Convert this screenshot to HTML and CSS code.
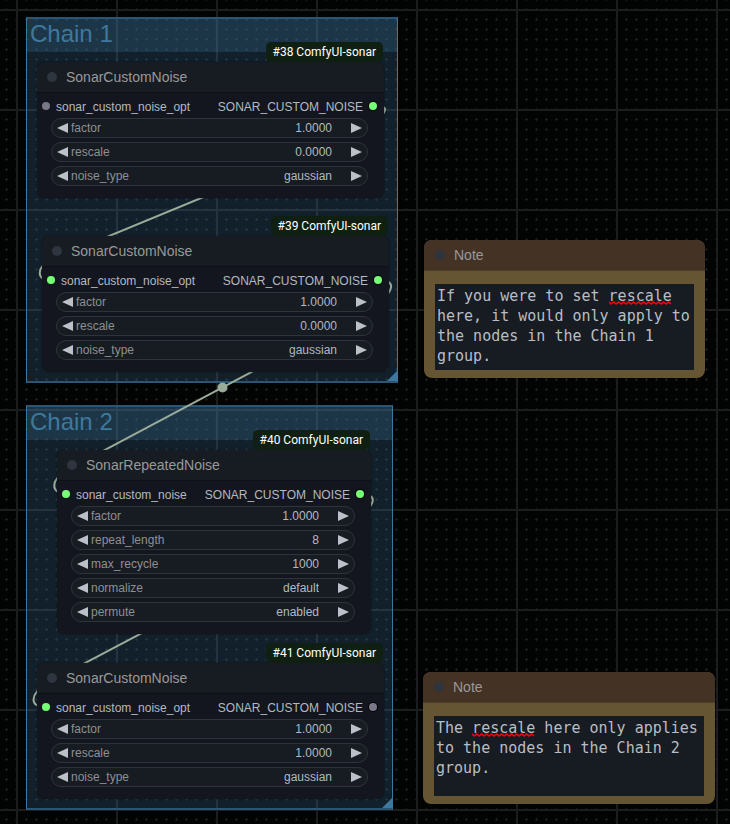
FILE: index.html
```html
<!DOCTYPE html>
<html lang="en">
<head>
<meta charset="utf-8">
<title>Workflow</title>
<link rel="stylesheet" href="styles.css">
</head>
<body>
<main class="canvas">
  <svg class="layer" aria-hidden="true">
    <defs>
      <pattern id="dots" x="1" y="4" width="10" height="10" patternUnits="userSpaceOnUse">
        <path class="dot-mark" d="M4 5h3v1h-3zM5 4h1v3h-1z"/>
      </pattern>
      <pattern id="lines" x="16" y="9" width="100" height="100" patternUnits="userSpaceOnUse">
        <path class="grid-line" d="M0 0h100v2h-98v98h-2z"/>
      </pattern>
    </defs>
    <rect width="100%" height="100%" fill="url(#dots)"/>
    <rect width="100%" height="100%" fill="url(#lines)"/>
  </svg>

  <section class="group group-1"><h2>Chain 1</h2></section>
  <section class="group group-2"><h2>Chain 2</h2></section>

  <svg class="layer links" aria-hidden="true">
    <path d="M373 106C389 106 389 108 373 127L51 260C36 267 36 281 51 280"/>
    <path d="M378 280C395 280 396 288 378 305L67 470C50 480 50 494 67 494"/>
    <path d="M360 494C377 494 377 502 360 518L47 683C29 695 29 707 47 707"/>
    <circle cx="222.500" cy="387.500" r="5"/>
  </svg>

  <article class="node node-38">
    <span class="badge">#38 ComfyUI-sonar</span>
    <header><i class="state"></i><h3>SonarCustomNoise</h3></header>
    <div class="slots"><i class="port"></i><span>sonar_custom_noise_opt</span><span class="out">SONAR_CUSTOM_NOISE</span><i class="port port-out on"></i></div>
    <div class="widgets">
      <div class="widget"><button aria-label="Decrease factor"><svg viewBox="0 0 11 10"><path d="M11 0v10L0 5z"/></svg></button><label for="f38">factor</label><input id="f38" value="1.0000"><button aria-label="Increase factor"><svg viewBox="0 0 11 10"><path d="M0 0v10l11-5z"/></svg></button></div>
      <div class="widget"><button aria-label="Decrease rescale"><svg viewBox="0 0 11 10"><path d="M11 0v10L0 5z"/></svg></button><label for="r38">rescale</label><input id="r38" value="0.0000"><button aria-label="Increase rescale"><svg viewBox="0 0 11 10"><path d="M0 0v10l11-5z"/></svg></button></div>
      <div class="widget"><button aria-label="Previous noise type"><svg viewBox="0 0 11 10"><path d="M11 0v10L0 5z"/></svg></button><label for="n38">noise_type</label><select id="n38"><option>gaussian</option></select><button aria-label="Next noise type"><svg viewBox="0 0 11 10"><path d="M0 0v10l11-5z"/></svg></button></div>
    </div>
  </article>

  <article class="node node-39">
    <span class="badge">#39 ComfyUI-sonar</span>
    <header><i class="state"></i><h3>SonarCustomNoise</h3></header>
    <div class="slots"><i class="port on"></i><span>sonar_custom_noise_opt</span><span class="out">SONAR_CUSTOM_NOISE</span><i class="port port-out on"></i></div>
    <div class="widgets">
      <div class="widget"><button aria-label="Decrease factor"><svg viewBox="0 0 11 10"><path d="M11 0v10L0 5z"/></svg></button><label for="f39">factor</label><input id="f39" value="1.0000"><button aria-label="Increase factor"><svg viewBox="0 0 11 10"><path d="M0 0v10l11-5z"/></svg></button></div>
      <div class="widget"><button aria-label="Decrease rescale"><svg viewBox="0 0 11 10"><path d="M11 0v10L0 5z"/></svg></button><label for="r39">rescale</label><input id="r39" value="0.0000"><button aria-label="Increase rescale"><svg viewBox="0 0 11 10"><path d="M0 0v10l11-5z"/></svg></button></div>
      <div class="widget"><button aria-label="Previous noise type"><svg viewBox="0 0 11 10"><path d="M11 0v10L0 5z"/></svg></button><label for="n39">noise_type</label><select id="n39"><option>gaussian</option></select><button aria-label="Next noise type"><svg viewBox="0 0 11 10"><path d="M0 0v10l11-5z"/></svg></button></div>
    </div>
  </article>

  <article class="node node-40">
    <span class="badge">#40 ComfyUI-sonar</span>
    <header><i class="state"></i><h3>SonarRepeatedNoise</h3></header>
    <div class="slots"><i class="port on"></i><span>sonar_custom_noise</span><span class="out">SONAR_CUSTOM_NOISE</span><i class="port port-out on"></i></div>
    <div class="widgets">
      <div class="widget"><button aria-label="Decrease factor"><svg viewBox="0 0 11 10"><path d="M11 0v10L0 5z"/></svg></button><label for="f40">factor</label><input id="f40" value="1.0000"><button aria-label="Increase factor"><svg viewBox="0 0 11 10"><path d="M0 0v10l11-5z"/></svg></button></div>
      <div class="widget"><button aria-label="Decrease repeat length"><svg viewBox="0 0 11 10"><path d="M11 0v10L0 5z"/></svg></button><label for="l40">repeat_length</label><input id="l40" value="8"><button aria-label="Increase repeat length"><svg viewBox="0 0 11 10"><path d="M0 0v10l11-5z"/></svg></button></div>
      <div class="widget"><button aria-label="Decrease max recycle"><svg viewBox="0 0 11 10"><path d="M11 0v10L0 5z"/></svg></button><label for="m40">max_recycle</label><input id="m40" value="1000"><button aria-label="Increase max recycle"><svg viewBox="0 0 11 10"><path d="M0 0v10l11-5z"/></svg></button></div>
      <div class="widget"><button aria-label="Previous normalize"><svg viewBox="0 0 11 10"><path d="M11 0v10L0 5z"/></svg></button><label for="z40">normalize</label><select id="z40"><option>default</option></select><button aria-label="Next normalize"><svg viewBox="0 0 11 10"><path d="M0 0v10l11-5z"/></svg></button></div>
      <div class="widget"><button aria-label="Previous permute"><svg viewBox="0 0 11 10"><path d="M11 0v10L0 5z"/></svg></button><label for="p40">permute</label><select id="p40"><option>enabled</option></select><button aria-label="Next permute"><svg viewBox="0 0 11 10"><path d="M0 0v10l11-5z"/></svg></button></div>
    </div>
  </article>

  <article class="node node-41">
    <span class="badge">#41 ComfyUI-sonar</span>
    <header><i class="state"></i><h3>SonarCustomNoise</h3></header>
    <div class="slots"><i class="port on"></i><span>sonar_custom_noise_opt</span><span class="out">SONAR_CUSTOM_NOISE</span><i class="port port-out"></i></div>
    <div class="widgets">
      <div class="widget"><button aria-label="Decrease factor"><svg viewBox="0 0 11 10"><path d="M11 0v10L0 5z"/></svg></button><label for="f41">factor</label><input id="f41" value="1.0000"><button aria-label="Increase factor"><svg viewBox="0 0 11 10"><path d="M0 0v10l11-5z"/></svg></button></div>
      <div class="widget"><button aria-label="Decrease rescale"><svg viewBox="0 0 11 10"><path d="M11 0v10L0 5z"/></svg></button><label for="r41">rescale</label><input id="r41" value="1.0000"><button aria-label="Increase rescale"><svg viewBox="0 0 11 10"><path d="M0 0v10l11-5z"/></svg></button></div>
      <div class="widget"><button aria-label="Previous noise type"><svg viewBox="0 0 11 10"><path d="M11 0v10L0 5z"/></svg></button><label for="n41">noise_type</label><select id="n41"><option>gaussian</option></select><button aria-label="Next noise type"><svg viewBox="0 0 11 10"><path d="M0 0v10l11-5z"/></svg></button></div>
    </div>
  </article>

  <article class="node note note-1">
    <header><i class="state"></i><h3><label for="note1">Note</label></h3></header>
    <div class="note-body">
      <textarea id="note1" spellcheck="false">If you were to set rescale here, it would only apply to the nodes in the Chain 1 group.</textarea>
      <svg class="squiggle" viewBox="0 0 63 4" aria-hidden="true"><path d="M0 1l2 2l2.500-2l2.500 2l2.500-2l2.500 2l2.500-2l2.500 2l2.500-2l2.500 2l2.500-2l2.500 2l2.500-2l2.500 2l2.500-2l2.500 2l2.500-2l2.500 2l2.500-2l2.500 2l2.500-2l2.500 2l2.500-2l2.500 2l2.500-2l2.500 2"/></svg>
    </div>
  </article>

  <article class="node note note-2">
    <header><i class="state"></i><h3><label for="note2">Note</label></h3></header>
    <div class="note-body">
      <textarea id="note2" spellcheck="false">The rescale here only applies to the nodes in the Chain 2 group.</textarea>
      <svg class="squiggle" viewBox="0 0 63 4" aria-hidden="true"><path d="M0 1l2 2l2.500-2l2.500 2l2.500-2l2.500 2l2.500-2l2.500 2l2.500-2l2.500 2l2.500-2l2.500 2l2.500-2l2.500 2l2.500-2l2.500 2l2.500-2l2.500 2l2.500-2l2.500 2l2.500-2l2.500 2l2.500-2l2.500 2l2.500-2l2.500 2"/></svg>
    </div>
  </article>
</main>
</body>
</html>
```
FILE: styles.css
```css
* { box-sizing: border-box; }

body {
  margin: 0;
  background: #020303;
  font: 12px/20px "Liberation Sans", Arial, sans-serif;
  color: #b4b9c0;
}

.canvas {
  position: relative;
  min-height: 100vh;
  overflow: hidden;
}

.layer {
  position: absolute;
  inset: 0;
  width: 100%;
  height: 100%;
}

.dot-mark { fill: #1c1e20; }
.grid-line { fill: #1d1d20; }

.links { fill: none; stroke: #9aab99; stroke-width: 2; }
.links circle { fill: #9aab99; stroke: none; }

/* Groups */
.group {
  position: absolute;
  background: rgba(63, 120, 158, 0.25);
  border: solid #3f789e;
  border-width: 2px 1px;
  border-top-color: #2b5673;
  border-bottom-color: #2b5673;
}
.group::after {
  content: "";
  position: absolute;
  right: 0;
  bottom: 0;
  width: 10px;
  height: 10px;
  background: #3f789e;
  clip-path: polygon(100% 0, 100% 100%, 0 100%);
}
.group h2 {
  margin: 0;
  padding: 0 0 4px 3px;
  background: rgba(63, 120, 158, 0.25);
  color: #3f789e;
  font-size: 24px;
  font-weight: 400;
  line-height: 29px;
}
.group-1 { left: 26px; top: 17px; width: 372px; height: 366px; }
.group-2 { left: 26px; top: 405px; width: 367px; height: 405px; }

/* Nodes */
.node {
  position: absolute;
  border-radius: 8px;
  background: #13161e;
  box-shadow: 0 0 2px rgba(0, 0, 0, 0.5);
}
.node-38 { left: 37px; top: 62px; width: 347px; }
.node-39 { left: 42px; top: 236px; width: 347px; }
.node-40 { left: 57px; top: 450px; width: 314px; }
.node-41 { left: 37px; top: 663px; width: 347px; }

.node header {
  display: flex;
  align-items: center;
  gap: 9px;
  height: 30px;
  padding-left: 10px;
  border-radius: 8px 8px 0 0;
  background: #171b22;
  box-shadow: 0 1px 0 rgba(0, 0, 0, 0.25);
}
.node h3 {
  margin: 0;
  color: #999;
  font-size: 14px;
  font-weight: 400;
}
.state {
  width: 10px;
  height: 10px;
  border-radius: 50%;
  background: #2f353e;
}

.badge {
  position: absolute;
  right: 1px;
  bottom: 100%;
  padding: 0 7px;
  border-radius: 5px;
  background: #0f1f12;
  color: #fff;
  font-family: Roboto, sans-serif;
  white-space: nowrap;
}

.slots {
  display: flex;
  align-items: center;
  gap: 6px;
  padding: 4px 7px 0 5px;
  line-height: 22px;
}
.slots .out { margin-left: auto; }
.port {
  width: 8px;
  height: 8px;
  margin-bottom: 2px;
  border-radius: 50%;
  background: #7a7788;
}
.port.on { background: #77ff77; }
.port-out { box-shadow: 0 0 0 1px #000; }

.widgets {
  display: grid;
  grid-template-columns: minmax(0, 1fr);
  gap: 4px;
  padding: 0 16px 12px 14px;
}
.widget {
  display: flex;
  align-items: center;
  height: 20px;
  padding: 0 5px;
  border: 1px solid #2f343c;
  border-radius: 10px;
  background: #171b22;
}
.widget label { margin-left: 3px; color: #8e9093; }
.widget button {
  display: flex;
  padding: 0;
  border: 0;
  background: none;
}
.widget button svg {
  width: 11px;
  height: 10px;
  fill: #bcc1c9;
}
.widget input,
.widget select {
  flex: 1;
  min-width: 0;
  height: 18px;
  margin: 0 19px 0 8px;
  padding: 0;
  border: 0;
  outline: 0;
  appearance: none;
  background: none;
  color: inherit;
  font: inherit;
  line-height: 18px;
  text-align: right;
  text-align-last: right;
}

/* Notes */
.note { background: #665533; }
.note header { padding-left: 11px; background: #443224; }
.note-1 { left: 424px; top: 240px; width: 281px; }
.note-2 { left: 423px; top: 672px; width: 292px; }

.note-body {
  position: relative;
  display: flex;
  padding: 14px 11px 8px;
  font: 15px/20px "DejaVu Sans Mono", monospace;
}
.note textarea {
  flex: 1;
  min-width: 0;
  height: 86px;
  padding: 2px;
  border: 0;
  outline: 0;
  resize: none;
  overflow: hidden;
  background: #171b22;
  color: #b9bec6;
  font: inherit;
}
.note-2 textarea { height: 80px; }

.squiggle {
  position: absolute;
  top: 31px;
  left: calc(13px + 19ch);
  width: 7ch;
  height: 4px;
  fill: none;
  stroke: #f00;
  stroke-width: 1.5px;
}
.note-2 .squiggle { left: calc(13px + 4ch); }
```
